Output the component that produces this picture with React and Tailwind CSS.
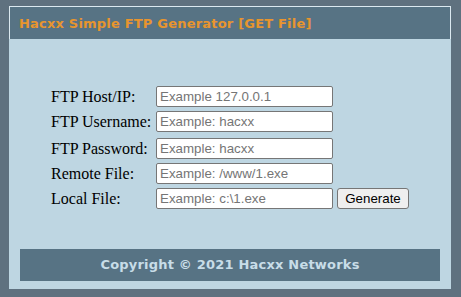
const FIELDS = [
  { label: 'FTP Host/IP:', placeholder: 'Example 127.0.0.1', mt: 'mt-0' },
  { label: 'FTP Username:', placeholder: 'Example: hacxx', mt: 'mt-[4px]' },
  { label: 'FTP Password:', placeholder: 'Example: hacxx', mt: 'mt-[6px]' },
  { label: 'Remote File:', placeholder: 'Example: /www/1.exe', mt: 'mt-[4px]' },
  { label: 'Local File:', placeholder: 'Example: c:\\1.exe', mt: 'mt-[4px]', button: true },
];

const FieldRow = ({ field }) => {
  return (
    <div className={`flex items-center h-[21px] ${field.mt}`}>
      <label className="w-[105px] text-[16px] text-black font-['Liberation_Serif',serif]">
        {field.label}
      </label>
      <input
        type="text"
        placeholder={field.placeholder}
        className="w-[177px] h-[21px] bg-white border border-[#767676] rounded-[2px] px-[3px] text-[13.33px] font-['Liberation_Sans',Arial,sans-serif] placeholder:text-[#757575] outline-none"
      />
      {field.button && (
        <button className="ml-[4px] w-[72px] h-[21px] bg-[#efefef] border border-[#767676] rounded-[3px] text-[13.33px] text-black font-['Liberation_Sans',Arial,sans-serif]">
          Generate
        </button>
      )}
    </div>
  );
};

const App = () => {
  return (
    <div className="w-[461px] h-[297px] bg-[#5f717f] pt-[6px] pl-[9px]">
      <div className="w-[442px] h-[283px] bg-[#bed6e2] flex flex-col">
        <div className="h-[33px] bg-[#577384] border border-[#dce9f0] border-b-0 flex items-center pl-[9px] pt-[2px]">
          <span className="text-[13px] font-bold text-[#e8952e] font-['DejaVu_Sans',Verdana,sans-serif] tracking-[0.2px]">
            Hacxx Simple FTP Generator [GET File]
          </span>
        </div>

        <div className="flex-1 pt-[47px] pl-[42px]">
          {FIELDS.map((field) => (
            <FieldRow key={field.label} field={field} />
          ))}
        </div>

        <div className="mx-[11px] mb-[8px] h-[32px] bg-[#577384] flex items-center justify-center">
          <span className="text-[13px] font-bold text-[#c8dde8] font-['DejaVu_Sans',Verdana,sans-serif] tracking-[0.2px]">
            Copyright © 2021 Hacxx Networks
          </span>
        </div>
      </div>
    </div>
  );
};

export default App;
